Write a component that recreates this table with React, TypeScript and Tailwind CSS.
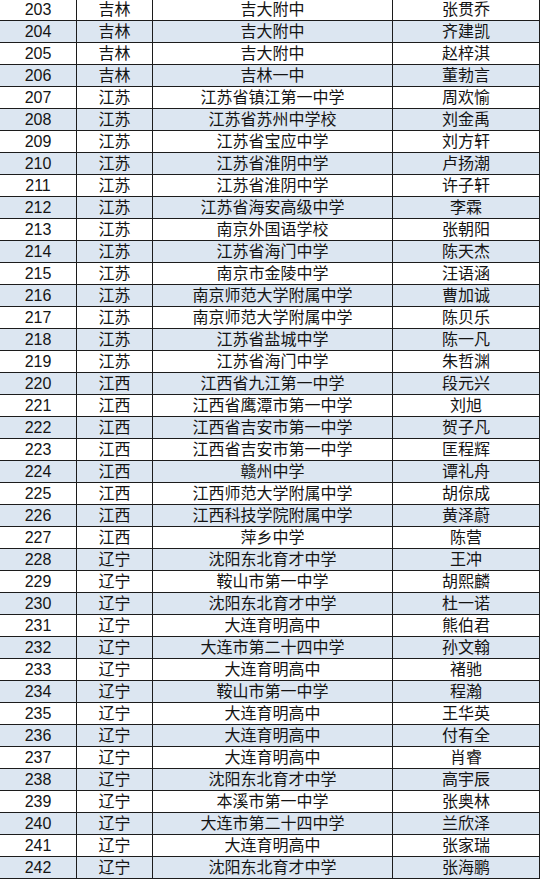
const rows: [number, string, string, string][] = [
  [203, "吉林", "吉大附中", "张贯乔"],
  [204, "吉林", "吉大附中", "齐建凯"],
  [205, "吉林", "吉大附中", "赵梓淇"],
  [206, "吉林", "吉林一中", "董勃言"],
  [207, "江苏", "江苏省镇江第一中学", "周欢愉"],
  [208, "江苏", "江苏省苏州中学校", "刘金禹"],
  [209, "江苏", "江苏省宝应中学", "刘方轩"],
  [210, "江苏", "江苏省淮阴中学", "卢扬潮"],
  [211, "江苏", "江苏省淮阴中学", "许子轩"],
  [212, "江苏", "江苏省海安高级中学", "李霖"],
  [213, "江苏", "南京外国语学校", "张朝阳"],
  [214, "江苏", "江苏省海门中学", "陈天杰"],
  [215, "江苏", "南京市金陵中学", "汪语涵"],
  [216, "江苏", "南京师范大学附属中学", "曹加诚"],
  [217, "江苏", "南京师范大学附属中学", "陈贝乐"],
  [218, "江苏", "江苏省盐城中学", "陈一凡"],
  [219, "江苏", "江苏省海门中学", "朱哲渊"],
  [220, "江西", "江西省九江第一中学", "段元兴"],
  [221, "江西", "江西省鹰潭市第一中学", "刘旭"],
  [222, "江西", "江西省吉安市第一中学", "贺子凡"],
  [223, "江西", "江西省吉安市第一中学", "匡程辉"],
  [224, "江西", "赣州中学", "谭礼舟"],
  [225, "江西", "江西师范大学附属中学", "胡倞成"],
  [226, "江西", "江西科技学院附属中学", "黄泽蔚"],
  [227, "江西", "萍乡中学", "陈营"],
  [228, "辽宁", "沈阳东北育才中学", "王冲"],
  [229, "辽宁", "鞍山市第一中学", "胡熙麟"],
  [230, "辽宁", "沈阳东北育才中学", "杜一诺"],
  [231, "辽宁", "大连育明高中", "熊伯君"],
  [232, "辽宁", "大连市第二十四中学", "孙文翰"],
  [233, "辽宁", "大连育明高中", "褚驰"],
  [234, "辽宁", "鞍山市第一中学", "程瀚"],
  [235, "辽宁", "大连育明高中", "王华英"],
  [236, "辽宁", "大连育明高中", "付有全"],
  [237, "辽宁", "大连育明高中", "肖睿"],
  [238, "辽宁", "沈阳东北育才中学", "高宇辰"],
  [239, "辽宁", "本溪市第一中学", "张奥林"],
  [240, "辽宁", "大连市第二十四中学", "兰欣泽"],
  [241, "辽宁", "大连育明高中", "张家瑞"],
  [242, "辽宁", "沈阳东北育才中学", "张海鹏"],
];

const cell = "flex items-center justify-center border-r border-b border-[#1c1c1c] text-[16px] leading-none";

export default function App() {
  return (
    <div
      className="w-[543px] h-[880px] bg-white overflow-hidden text-[#141414]"
      style={{ fontFamily: '"Liberation Sans", "Noto Sans CJK SC", sans-serif' }}
    >
      <div className="w-[540px]">
        {rows.map(([no, prov, school, name], i) => (
          <div
            key={no}
            className={`grid grid-cols-[77px_76px_240px_147px] ${i === 0 ? "h-[21px]" : "h-[22px]"} ${
              i % 2 === 1 ? "bg-[#dce6f1]" : "bg-white"
            }`}
          >
            <div className={cell}>{no}</div>
            <div className={cell}>{prov}</div>
            <div className={cell}>{school}</div>
            <div className={cell}>{name}</div>
          </div>
        ))}
      </div>
    </div>
  );
}
